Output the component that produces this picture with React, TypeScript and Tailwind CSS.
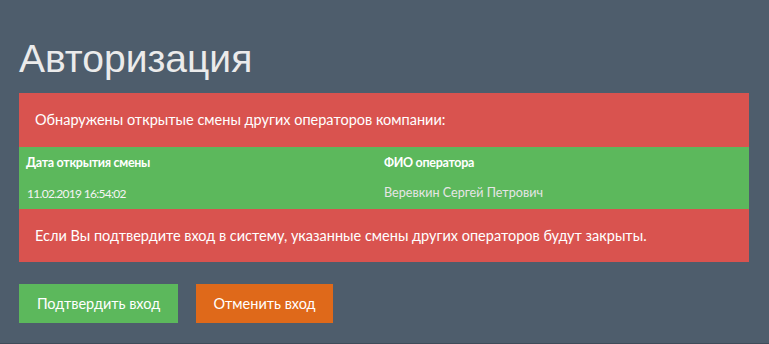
export default function App() {
    return (
        <div className="min-h-[344px] bg-[#4e5d6c] border-b border-[#3f4c59] px-[19px] pt-[37px] pb-[20px] text-[#ebebeb] font-['Lato','Noto_Sans',sans-serif]">

            {/* Heading */}
            <h1 className="font-['Liberation_Sans',Arial,sans-serif] text-[39px] leading-[44px] text-[#ebebeb] mb-[12px]">
                Авторизация
            </h1>

            {/* Warning block */}
            <div className="w-[730px]">
                <div className="h-[54px] bg-[#d9534f] flex items-center px-[16px] text-[14.5px] text-white">
                    Обнаружены открытые смены других операторов компании:
                </div>

                <div className="bg-[#5cb85c] h-[62px] grid grid-cols-[358px_1fr] grid-rows-2">
                    <div className="pl-[7px] pt-[2px] flex items-center font-bold text-[12.5px] tracking-[-0.3px] text-white">Дата открытия смены</div>
                    <div className="pl-[7px] pt-[2px] flex items-center font-bold text-[12.5px] tracking-[-0.3px] text-white">ФИО оператора</div>
                    <div className="pl-[8px] flex items-center text-[12px] tracking-[-0.7px] text-[#f4f4f4]">11.02.2019 16:54:02</div>
                    <div className="pl-[7px] flex items-center text-[12.6px] text-[#e6e6e6]">Веревкин Сергей Петрович</div>
                </div>

                <div className="h-[53px] bg-[#d9534f] flex items-center px-[16px] text-[14.5px] text-white">
                    Если Вы подтвердите вход в систему, указанные смены других операторов будут закрыты.
                </div>
            </div>

            {/* Actions */}
            <div className="flex gap-[18px] mt-[22px]">
                <button className="w-[159px] h-[39px] bg-[#5cb85c] text-white text-[14.5px]">
                    Подтвердить вход
                </button>
                <button className="w-[137px] h-[39px] bg-[#df691a] text-white text-[14.5px]">
                    Отменить вход
                </button>
            </div>
        </div>
    );
}
